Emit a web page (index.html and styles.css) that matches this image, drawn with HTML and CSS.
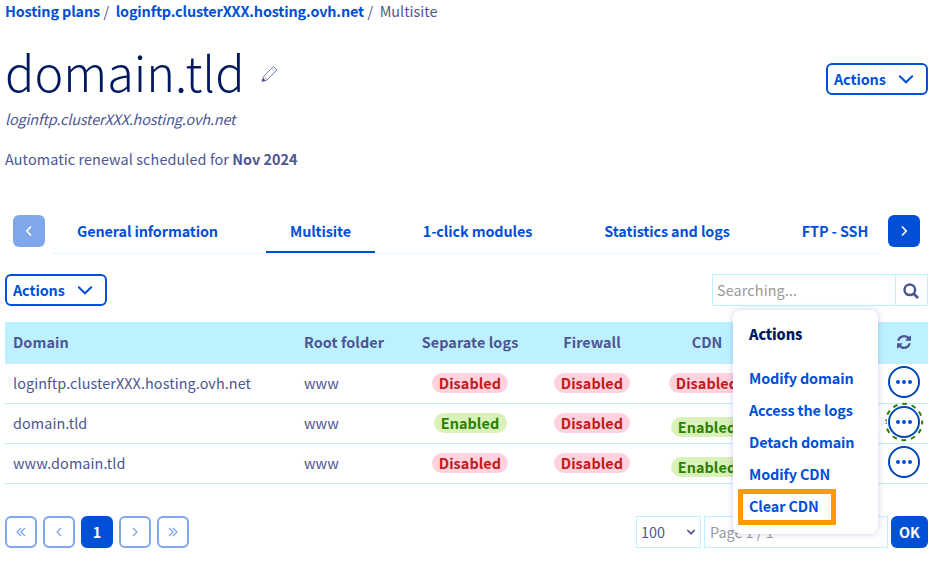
FILE: index.html
```html
<!DOCTYPE html>
<html lang="en">
<head>
<meta charset="utf-8">
<title>Multisite</title>
<link rel="stylesheet" href="styles.css">
</head>
<body>
<svg class="defs" width="0" height="0" aria-hidden="true">
  <symbol id="chevron-down" viewBox="0 0 16 16"><path d="M1.800 5.300 8 11.300 14.200 5.300" fill="none" stroke="currentColor" stroke-width="2" stroke-linecap="round"/></symbol>
  <symbol id="dots" viewBox="0 0 16 4"><circle cx="2" cy="2" r="2"/><circle cx="8" cy="2" r="2"/><circle cx="14" cy="2" r="2"/></symbol>
</svg>
<main class="page">
  <nav class="breadcrumb"><a class="crumb-plans">Hosting plans</a><span class="slash">/</span><a class="crumb-host">loginftp.clusterXXX.hosting.ovh.net</a><span class="slash">/</span><span class="crumb-current">Multisite</span></nav>

  <header class="heading">
    <div class="title-row">
      <h1>domain.tld</h1>
      <svg class="pencil" viewBox="0 0 18 18" width="18" height="18" fill="none" stroke-width="1"><path d="M1 16.500 2.500 11.500 12.500 1.500 16 5 6 15Z" stroke="#7480b5"/><path d="M3 11.500 5.800 14.500" stroke="#c98f7c"/><path d="M11 3.500 14 6.500" stroke="#8fb0d8"/><path d="M1 16.500 2 13 4.500 15.500Z" fill="#3d4588"/></svg>
    </div>
    <button class="btn-outline"><span>Actions</span><svg width="16" height="16"><use href="#chevron-down"/></svg></button>
  </header>
  <p class="subtitle">loginftp.clusterXXX.hosting.ovh.net</p>
  <p class="renewal"><span class="renewal-text">Automatic renewal scheduled for</span> <b>Nov 2024</b></p>

  <nav class="tabs">
    <button class="tab-nav tab-prev"><svg width="8" height="12" viewBox="0 0 8 12"><path d="M6 1.500 1.800 6 6 10.500"/></svg></button>
    <div class="tab-list">
      <a class="tab t-general"><span>General information</span></a>
      <a class="tab t-multisite active"><span>Multisite</span></a>
      <a class="tab t-modules"><span>1-click modules</span></a>
      <a class="tab t-stats"><span>Statistics and logs</span></a>
      <a class="tab t-ftp"><span>FTP - SSH</span></a>
    </div>
    <button class="tab-nav tab-next"><svg width="8" height="12" viewBox="0 0 8 12"><path d="M2 1.500 6.200 6 2 10.500"/></svg></button>
  </nav>

  <div class="toolbar">
    <button class="btn-outline"><span>Actions</span><svg width="16" height="16"><use href="#chevron-down"/></svg></button>
    <div class="search">
      <span class="search-field">Searching...</span>
      <span class="search-icon"><svg width="16" height="16" viewBox="0 0 16 16" fill="none" stroke="currentColor" stroke-linecap="round"><circle cx="6.800" cy="6.800" r="5.300" stroke-width="2.500"/><path d="m11 11 3.300 3.300" stroke-width="2.700"/></svg></span>
    </div>
  </div>

  <section class="table">
    <div class="row head">
      <span class="cell">Domain</span><span class="cell">Root folder</span><span class="cell mid">Separate logs</span><span class="cell mid">Firewall</span><span class="cell mid">CDN</span><span></span>
      <span class="cell mid"><svg class="refresh" width="14" height="14" viewBox="0 128 1536 1536" fill="currentColor"><path d="M1511 1056q0 5-1 7-64 268-268 434.500t-478 166.500q-146 0-282.500-55t-243.500-157l-129 129q-19 19-45 19t-45-19-19-45v-448q0-26 19-45t45-19h448q26 0 45 19t19 45-19 45l-137 137q71 66 161 102t187 36q134 0 250-65t186-179q11-17 53-117 8-23 30-23h192q13 0 22.500 9.500t9.500 22.500zm25-800v448q0 26-19 45t-45 19h-448q-26 0-45-19t-19-45 19-45l138-138q-148-137-349-137-134 0-250 65t-186 179q-11 17-53 117-8 23-30 23h-199q-13 0-22.500-9.500t-9.500-22.500v-7q65-268 270-434.500t480-166.500q146 0 284 55.500t245 156.500l130-129q19-19 45-19t45 19 19 45z"/></svg></span>
    </div>
    <div class="row">
      <span class="cell host">loginftp.clusterXXX.hosting.ovh.net</span><span class="cell">www</span>
      <span class="cell mid"><span class="badge off">Disabled</span></span><span class="cell mid"><span class="badge off">Disabled</span></span><span class="cell mid"><span class="badge off">Disabled</span></span><span></span>
      <span class="cell mid"><button class="more"><svg width="16" height="4"><use href="#dots"/></svg></button></span>
    </div>
    <div class="row">
      <span class="cell">domain.tld</span><span class="cell">www</span>
      <span class="cell mid"><span class="badge on">Enabled</span></span><span class="cell mid"><span class="badge off">Disabled</span></span><span class="cell mid low"><span class="badge on">Enabled</span></span><span></span>
      <span class="cell mid anchor">
        <button class="more"><svg width="16" height="4"><use href="#dots"/></svg></button>
        <svg class="focus-ring" width="40" height="40" viewBox="0 0 40 40"><circle cx="20" cy="20" r="18.200" fill="none" stroke="#2b8000" stroke-width="2" stroke-dasharray="4.700 4.830" stroke-dashoffset="2.350"/></svg>
        <span class="menu">
          <strong>Actions</strong>
          <a>Modify domain</a>
          <a>Access the logs</a>
          <a>Detach domain</a>
          <a>Modify CDN</a>
          <a class="clear">Clear CDN</a>
        </span>
      </span>
    </div>
    <div class="row">
      <span class="cell">www.domain.tld</span><span class="cell">www</span>
      <span class="cell mid"><span class="badge off">Disabled</span></span><span class="cell mid"><span class="badge off">Disabled</span></span><span class="cell mid low"><span class="badge on">Enabled</span></span><span></span>
      <span class="cell mid"><button class="more"><svg width="16" height="4"><use href="#dots"/></svg></button></span>
    </div>
  </section>

  <footer class="pagination">
    <div class="pages">
      <button class="pg"><svg width="10" height="10" viewBox="0 0 10 10"><path d="M5 1 1 5l4 4M9 1 5 5l4 4"/></svg></button>
      <button class="pg"><svg width="10" height="10" viewBox="0 0 10 10"><path d="M7 1 3 5l4 4"/></svg></button>
      <button class="pg current">1</button>
      <button class="pg"><svg width="10" height="10" viewBox="0 0 10 10"><path d="m3 1 4 4-4 4"/></svg></button>
      <button class="pg"><svg width="10" height="10" viewBox="0 0 10 10"><path d="m1 1 4 4-4 4M5 1l4 4-4 4"/></svg></button>
    </div>
    <div class="goto">
      <span class="size"><span>100</span><svg width="10" height="8" viewBox="0 0 10 8"><path d="m1.300 2 3.700 3.700L8.700 2" fill="none" stroke="currentColor" stroke-width="1.700"/></svg></span>
      <span class="page-field">Page 1 / 1</span>
      <button class="ok">OK</button>
    </div>
  </footer>
</main>
</body>
</html>
```
FILE: styles.css
```css
* { box-sizing: border-box; }
body {
  margin: 0;
  background: #fff;
  color: #4d5592;
  font: 14.4px/20px "Noto Sans CJK JP", "Noto Sans CJK SC", sans-serif;
  white-space: nowrap;
}
svg { display: block; flex: none; }
.defs { position: absolute; }
h1, p { margin: 0; }
button { font: inherit; padding: 0; margin: 0; border: 0; background: none; color: inherit; }
.page { width: 944px; height: 568px; padding: 1px 16px 0 5px; overflow: hidden; }

.breadcrumb { display: flex; height: 21px; }
.breadcrumb a { color: #0050d7; font-weight: 700; letter-spacing: -0.14px; }
.slash { margin: 0 6.500px 0 3.500px; }

.heading { display: flex; justify-content: space-between; height: 87px; }
.title-row { display: flex; }
h1 { height: 87px; font-size: 48.6px; line-height: 98px; font-weight: 300; color: #00185e; }
.pencil { margin: 43px 0 0 16px; }
.btn-outline {
  display: flex; align-items: center; justify-content: space-between;
  width: 102px; height: 32px; padding: 0 12px 0 6px;
  border: 2px solid #0050d7; border-radius: 6px;
  color: #0050d7; font-weight: 700; letter-spacing: -0.1px;
}
.heading .btn-outline { margin-top: 41px; }
.subtitle { height: 40px; font-style: italic; letter-spacing: -0.14px; }
.renewal { height: 20px; }
.renewal-text, .host { letter-spacing: 0.1px; }

.tabs { display: flex; height: 39px; margin-top: 46px; padding: 0 8px; }
.tab-nav { width: 32px; height: 32px; border-radius: 6px; display: flex; align-items: center; justify-content: center; background: #0050d7; }
.tab-nav path { fill: none; stroke: #fff; stroke-width: 1.7; }
.tab-nav.tab-prev { background: #80a7eb; }
.tab-list { display: flex; width: 827px; height: 39px; margin: 0 8px; border-bottom: 1px solid #e3f3ff; overflow: hidden; }
.tab { display: flex; justify-content: center; height: 38px; padding-top: 6px; color: #0050d7; font-weight: 700; letter-spacing: -0.12px; flex: none; }
.t-general { width: 189px; margin-right: 24px; }
.t-multisite { width: 109px; margin-right: 24px; }
.t-modules { width: 157px; margin-right: 24px; }
.t-stats { width: 174px; margin-right: 24px; }
.t-ftp { width: 114px; }
.active { border-bottom: 2px solid #0050d7; }

.toolbar { display: flex; justify-content: space-between; margin-top: 20px; height: 48px; }
.search { display: flex; width: 216px; height: 32px; border: 1px solid #bef1ff; }
.search-field { flex: 1; padding: 5px 4px; color: #999; letter-spacing: 0.12px; }
.search-icon { display: flex; align-items: center; justify-content: center; width: 32px; padding: 1px 1px 0 0; border-left: 1px solid #bef1ff; }

.row { display: grid; grid-template-columns: 291px 112px 124px 120px 110px 1fr 48px; height: 40px; border-bottom: 1px solid #bef1ff; }
.head { height: 42px; background: #bef1ff; font-weight: 700; letter-spacing: 0.06px; }
.cell { display: flex; align-items: center; padding: 0 8px 2px; letter-spacing: 0.08px; }
.mid { justify-content: center; padding: 0 0 2px; }
.row:not(.head) .mid { padding-bottom: 1px; }
.row .mid.low { padding-top: 8px; }
.refresh { margin-top: 1px; }
.badge { height: 20px; line-height: 19px; border-radius: 10px; font-weight: 700; text-align: center; }
.off { width: 76px; background: #ffd2dd; color: #c11b1b; }
.on { width: 73px; background: #d9f2b8; color: #2b8000; }
.more { display: flex; align-items: center; justify-content: center; width: 32px; height: 32px; margin-top: -2px; border: 2px solid #0046bd; border-radius: 50%; flex: none; }
.more svg { fill: #0050d7; }
.anchor { position: relative; }
.focus-ring { position: absolute; left: 4px; top: -2px; }
.menu {
  position: absolute; right: 50px; top: -94px; width: 145px; height: 224px;
  display: flex; flex-direction: column; padding: 14px 16px 0;
  background: #fff; border-radius: 8px; box-shadow: 0 0 7px rgba(0, 14, 156, .2);
  font-weight: 700; color: #0050d7; letter-spacing: -0.12px;
}
.menu::after {
  content: ""; position: absolute; left: 100%; top: 103px;
  border: solid transparent; border-width: 9px 0 9px 9px; border-left-color: #f3f3fd;
}
.menu strong { color: #00185e; margin-bottom: 18px; line-height: 20px; }
.menu a { height: 32px; line-height: 32px; }
.menu .clear { width: 98px; height: 36px; margin: -1px 0 0 -11px; border: 5px solid #ff9a00; border-radius: 1px; padding-left: 6px; line-height: 24px; }

.pagination { display: flex; justify-content: space-between; margin-top: 32px; height: 32px; }
.pages { display: flex; gap: 6px; }
.pg { display: flex; align-items: center; justify-content: center; width: 32px; height: 32px; border: 2px solid #80a7eb; border-radius: 6px; }
.pg path { fill: none; stroke: #80a7eb; stroke-width: 1.3; }
.pg.current { background: #0050d7; border-color: #0050d7; color: #fff; font-weight: 700; }
.goto { display: flex; gap: 3px; }
.size { display: flex; align-items: center; justify-content: space-between; width: 65px; border: 1px solid #bef1ff; padding: 0 4px; }
.page-field { width: 184px; border: 1px solid #bef1ff; padding: 5px; color: #999; }
.ok { width: 37px; background: #0050d7; color: #fff; font-weight: 700; border-radius: 6px; }
```
